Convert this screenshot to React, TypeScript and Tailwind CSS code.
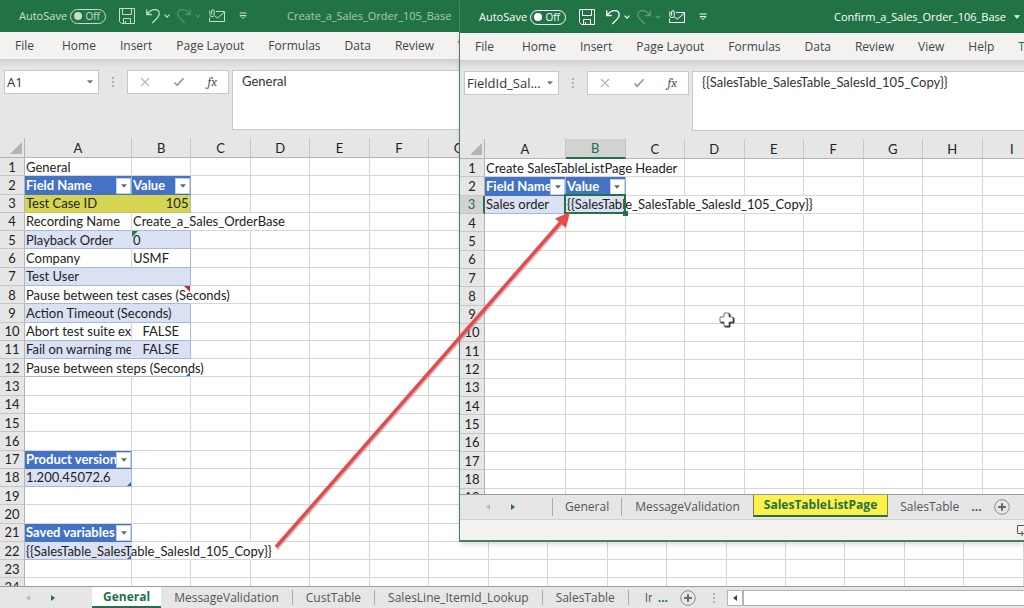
import React from 'react';
import clsx from 'clsx';

interface Cell {
  text?: string;
  className?: string;
  open?: boolean; // text runs on into the next cell, so there is no line on the right
  filter?: boolean;
  mark?: 'error' | 'comment' | 'end';
  selected?: boolean;
}

interface SheetData {
  columns: string[];
  rowCount: number;
  cells: Record<string, Cell>;
  active?: { column: string; row: number };
}

const HEAD = 'bg-[#4472c4] text-white font-bold overflow-hidden border-b-[#4472c4] border-r-[#8ea9db]';
const BAND = 'bg-[#d9e1f2] border-b-[#a3b9e0]';
const PLAIN = 'border-b-[#a3b9e0]';
const YELLOW = 'bg-[#d6d551] border-b-[#c3c56b]';
const EDGE = 'border-r-[#a3b9e0]';

const generalSheet: SheetData = {
  columns: 'ABCDEFGHIJKLMNOP'.split(''),
  rowCount: 24,
  cells: {
    A1: { text: 'General' },
    A2: { text: 'Field Name', className: HEAD, filter: true },
    B2: { text: 'Value', className: HEAD, filter: true },
    A3: { text: 'Test Case ID', className: YELLOW, open: true },
    B3: { text: '105', className: clsx(YELLOW, EDGE, 'text-right') },
    A4: { text: 'Recording Name', className: PLAIN },
    B4: { text: 'Create_a_Sales_OrderBase', className: PLAIN, open: true },
    C4: { open: true },
    A5: { text: 'Playback Order', className: BAND, open: true },
    B5: { text: '0', className: clsx(BAND, EDGE), mark: 'error' },
    A6: { text: 'Company', className: PLAIN },
    B6: { text: 'USMF', className: clsx(PLAIN, EDGE) },
    A7: { text: 'Test User', className: BAND, open: true },
    B7: { className: clsx(BAND, EDGE) },
    A8: { text: 'Pause between test cases (Seconds)', className: PLAIN, open: true },
    B8: { className: PLAIN, open: true, mark: 'comment' },
    A9: { text: 'Action Timeout (Seconds)', className: BAND, open: true },
    B9: { className: clsx(BAND, EDGE) },
    A10: { text: 'Abort test suite exe', className: clsx(PLAIN, 'overflow-hidden') },
    B10: { text: 'FALSE', className: clsx(PLAIN, EDGE, 'text-center') },
    A11: { text: 'Fail on warning me', className: clsx(BAND, 'overflow-hidden'), open: true },
    B11: { text: 'FALSE', className: clsx(BAND, EDGE, 'text-center') },
    A12: { text: 'Pause between steps (Seconds)', className: PLAIN, open: true },
    B12: { className: PLAIN, open: true, mark: 'end' },
    A17: { text: 'Product version', className: HEAD, filter: true },
    A18: { text: '1.200.45072.6', className: clsx(BAND, EDGE), mark: 'end' },
    A21: { text: 'Saved variables', className: HEAD, filter: true },
    A22: { text: '{{SalesTable_SalesTable_SalesId_105_Copy}}', className: BAND, open: true, mark: 'end' },
    B22: { open: true },
    C22: { open: true },
  },
};

const listPageSheet: SheetData = {
  columns: 'ABCDEFGHI'.split(''),
  rowCount: 19,
  active: { column: 'B', row: 3 },
  cells: {
    A1: { text: 'Create SalesTableListPage Header', open: true },
    B1: { open: true },
    A2: { text: 'Field Name', className: HEAD, filter: true },
    B2: { text: 'Value', className: HEAD, filter: true },
    A3: { text: 'Sales order', className: BAND },
    B3: { text: '{{SalesTable_SalesTable_SalesId_105_Copy}}', className: BAND, open: true, selected: true },
    C3: { open: true },
    D3: { open: true },
    E3: { open: true },
  },
};

const ribbonTabs = ['Home', 'Insert', 'Page Layout', 'Formulas', 'Data', 'Review', 'View', 'Help'];

const Chevron: React.FC<{ className?: string }> = ({ className }) => (
  <svg className={clsx('h-1 w-1.5 shrink-0', className)} viewBox="0 0 6 4" fill="none" stroke="currentColor" strokeWidth="1.2">
    <path d="M.6.7 3 3.1 5.4.7" />
  </svg>
);

const Caret: React.FC<{ className?: string }> = ({ className }) => (
  <svg className={clsx('h-1 w-1.5 shrink-0', className)} viewBox="0 0 6 4" fill="currentColor">
    <path d="M0 .2h6L3 3.8z" />
  </svg>
);

const TitleBar: React.FC<{ title: string; inactive?: boolean }> = ({ title, inactive }) => (
  <header className="flex h-8 shrink-0 items-center bg-[#217346] pl-[19px] pr-1 text-white">
    <div className={clsx('flex items-center', inactive && 'opacity-75')}>
      <span className="w-[51px] text-[11px] leading-4">AutoSave</span>
      <button
        role="switch"
        aria-checked="false"
        aria-label="AutoSave"
        className="flex h-[15px] w-9 items-center justify-between rounded-full border border-white pl-[3px] pr-[5px] text-[10px] leading-3"
      >
        <span className="h-2 w-2 shrink-0 rounded-full bg-white" />
        Off
      </button>
      <button aria-label="Save" className="ml-[13px]">
        <svg className="h-4 w-4" viewBox="0 0 16 16" fill="none" stroke="currentColor">
          <path d="M.5.5h15v15h-13l-2-2zM3.5.5v6h9v-6M4.5 15.500v-5h7v5M6.500 13v2.500" />
        </svg>
      </button>
      <button aria-label="Undo" className="ml-[11px] flex items-center gap-1">
        <svg className="h-4 w-[14px]" viewBox="0 0 14 16" fill="none" stroke="currentColor" strokeWidth="1.3">
          <path d="M.8 1.500v5h5M1 6.300C3.500 3 6 1.700 8.800 1.700c2.600 0 4.400 1.800 4.400 4.100 0 1.500-.6 2.600-1.700 3.800L6.300 15" />
        </svg>
        <Chevron />
      </button>
      <button aria-label="Redo" className="ml-[7px] flex items-center gap-1 opacity-30">
        <svg className="h-4 w-[14px]" viewBox="0 0 14 16" fill="none" stroke="currentColor" strokeWidth="1.3">
          <path d="M13.200 1.500v5h-5M13 6.300C10.500 3 8 1.700 5.200 1.700 2.600 1.700.8 3.500.8 5.800c0 1.500.6 2.600 1.700 3.800L7.700 15" />
        </svg>
        <Chevron />
      </button>
      <button aria-label="Email" className="ml-2">
        <svg className="h-4 w-4" viewBox="0 0 16 16" fill="none" stroke="currentColor">
          <path d="M7 3.500h8.500v10H.5V9.500M5.500 8l3 2 7-6" />
          <path d="M.8 2.500v4a2.200 2.200 0 0 0 4.400 0V3a1.300 1.300 0 0 0-2.600 0v3.500" />
        </svg>
      </button>
      <button aria-label="Customize Quick Access Toolbar" className="ml-[14px]">
        <svg className="h-2 w-2" viewBox="0 0 8 8" fill="none" stroke="currentColor">
          <path d="M.5 1h7M1 3.500h6L4 6.500z" />
        </svg>
      </button>
    </div>
    <div className={clsx('flex items-center text-[11px] leading-4', inactive ? 'ml-10 opacity-60' : 'ml-auto', 'gap-2')}>
      <span>{title}</span>
      <Caret />
    </div>
  </header>
);

const Ribbon: React.FC = () => (
  <nav className="flex h-7 shrink-0 items-center gap-6 overflow-hidden whitespace-nowrap border-b border-[#d0cecc] bg-[#f3f2f1] pl-[15px] text-xs leading-4 text-[#444]">
    <button className="mr-1">File</button>
    {ribbonTabs.map(tab => (
      <button key={tab}>{tab}</button>
    ))}
    <button className="text-[#217346]">Table Design</button>
  </nav>
);

const Dots: React.FC = () => (
  <span className="flex flex-col gap-0.5">
    <i className="h-0.5 w-0.5 bg-[#b0b0b0]" />
    <i className="h-0.5 w-0.5 bg-[#b0b0b0]" />
    <i className="h-0.5 w-0.5 bg-[#b0b0b0]" />
  </span>
);

const FormulaBar: React.FC<{ name: string; value: string }> = ({ name, value }) => (
  <div className="flex shrink-0 items-start bg-gradient-to-b from-[#d4d4d4] via-[#e6e6e6] via-10% to-[#e6e6e6] pb-2 pl-1 pt-2.5 text-[#333]">
    <div className="flex h-6 w-[95px] shrink-0 items-center border border-[#c8c8c8] bg-white pl-0.5 pr-[5px]">
      <input
        aria-label="Name box"
        defaultValue={name}
        className="w-0 flex-1 text-[13px] leading-4 outline-none"
      />
      <Caret className="text-[#777]" />
    </div>
    <div className="flex h-6 w-7 shrink-0 items-center justify-center">
      <Dots />
    </div>
    <div className="flex h-6 w-[102px] shrink-0 items-center justify-between border border-[#c8c8c8] bg-white pl-3 pr-[11px]">
      <button aria-label="Cancel">
        <svg className="h-2.5 w-2.5" viewBox="0 0 10 10" stroke="#b5b5b5" strokeWidth="1.2">
          <path d="m1 1 8 8M9 1 1 9" />
        </svg>
      </button>
      <button aria-label="Enter">
        <svg className="h-2.5 w-2.5" viewBox="0 0 10 10" fill="none" stroke="#999" strokeWidth="1.700">
          <path d="m.5 5.500 2.700 2.700 6.300-7" />
        </svg>
      </button>
      <button aria-label="Insert function" className="font-serif text-[13px] italic leading-4 text-[#555]">
        fx
      </button>
    </div>
    <textarea
      aria-label="Formula"
      defaultValue={value}
      className="ml-[3px] h-[60px] flex-1 resize-none border border-r-0 border-[#c8c8c8] bg-white px-[9px] py-0.5 font-[Lato,sans-serif] text-[13px] leading-4 outline-none"
    />
  </div>
);

const SheetCell: React.FC<{ cell?: Cell }> = ({ cell = {} }) => (
  <td
    className={clsx(
      'border-b border-r border-[#d6d6d6] py-0 pl-px pr-0.5',
      (cell.filter || cell.mark || cell.selected) && 'relative',
      cell.className,
      cell.open && 'border-r-transparent',
    )}
  >
    {cell.text}
    {cell.filter && (
      <button
        aria-label={`Filter ${cell.text}`}
        className="absolute bottom-0 right-0 flex h-4 w-[15px] items-center justify-center border border-[#c5d0e6] bg-white text-[#666]"
      >
        <Caret />
      </button>
    )}
    {cell.mark === 'error' && <i className="absolute left-0 top-0 border-r-[6px] border-t-[6px] border-r-transparent border-t-[#1e8040]" />}
    {cell.mark === 'comment' && <i className="absolute right-0 top-0 border-l-[6px] border-t-[6px] border-l-transparent border-t-[#d6202a]" />}
    {cell.mark === 'end' && <i className="absolute bottom-0 right-0 border-b-4 border-l-4 border-b-[#3a5fb0] border-l-transparent" />}
    {cell.selected && (
      <span className="absolute -bottom-px -left-0.5 -right-px -top-0.5 border-2 border-[#217346]">
        <i className="absolute -bottom-1 -right-1 h-[5px] w-[5px] bg-[#217346]" />
      </span>
    )}
  </td>
);

const Sheet: React.FC<{ sheet: SheetData; className: string; firstColumn: string }> = ({ sheet, className, firstColumn }) => (
  <div className="min-h-0 flex-1 overflow-hidden bg-white">
    <table
      className={clsx(
        'table-fixed border-separate border-spacing-0 whitespace-nowrap font-[Lato,sans-serif] text-[13px] leading-4 text-[#222]',
        className,
      )}
    >
      <colgroup>
        <col className="w-[25px]" />
        <col className={firstColumn} />
      </colgroup>
      <thead>
        <tr className="h-5">
          <th className="border-b border-r border-[#b4b4b4] bg-[#e6e6e6] p-0" aria-label="Select all">
            <svg className="ml-auto mr-0.5 h-3 w-3" viewBox="0 0 12 12" fill="#b4b4b4">
              <path d="M12 0v12H0z" />
            </svg>
          </th>
          {sheet.columns.map(column => (
            <th
              key={column}
              className={clsx(
                'border-r p-0 font-normal',
                column === sheet.active?.column
                  ? 'border-b-2 border-b-[#217346] border-r-[#c0c0c0] bg-[#d2d2d2] text-[#217346]'
                  : 'border-b border-b-[#b4b4b4] border-r-[#c6c6c6] bg-[#e6e6e6]',
              )}
            >
              {column}
            </th>
          ))}
        </tr>
      </thead>
      <tbody>
        {Array.from({ length: sheet.rowCount }, (_, i) => i + 1).map(row => (
          <tr key={row}>
            <th
              className={clsx(
                'border-b border-b-[#c6c6c6] p-0 font-normal',
                row === sheet.active?.row
                  ? 'border-r-2 border-r-[#217346] bg-[#d2d2d2] text-[#217346]'
                  : 'border-r border-r-[#b4b4b4] bg-[#e6e6e6]',
              )}
            >
              {row}
            </th>
            {sheet.columns.map(column => (
              <SheetCell key={column} cell={sheet.cells[`${column}${row}`]} />
            ))}
          </tr>
        ))}
      </tbody>
    </table>
  </div>
);

const SheetNav: React.FC = () => (
  <div className="flex w-[92px] shrink-0 items-center gap-[21px] pl-[26px]">
    <button aria-label="Previous sheet">
      <svg className="h-1.5 w-1" viewBox="0 0 4 6" fill="#bbb">
        <path d="M4 0v6L0 3z" />
      </svg>
    </button>
    <button aria-label="Next sheet">
      <svg className="h-1.5 w-1" viewBox="0 0 4 6" fill="#217346">
        <path d="M0 0v6l4-3z" />
      </svg>
    </button>
  </div>
);

const AddSheet: React.FC = () => (
  <button aria-label="New sheet" className="shrink-0">
    <svg className="h-4 w-4" viewBox="0 0 16 16" fill="none" stroke="#8a8a8a">
      <circle cx="8" cy="8" r="7.300" />
      <path d="M8 4.200v7.600M4.200 8h7.600" stroke="#666" strokeWidth="2" />
    </svg>
  </button>
);

const SheetTab: React.FC<{ label: string; className?: string }> = ({ label, className }) => (
  <button className={clsx('my-[3px] shrink-0 border-[#ababab]', className)}>{label}</button>
);

const CreateOrderWindow: React.FC = () => (
  <section className="flex h-full flex-col">
    <TitleBar title="Create_a_Sales_Order_105_Base" inactive />
    <Ribbon />
    <FormulaBar name="A1" value="General" />
    <Sheet sheet={generalSheet} className="h-[459px] w-full" firstColumn="w-[107px]" />
    <footer className="flex h-[22px] shrink-0 items-stretch whitespace-nowrap border-t border-[#9c9c9c] bg-[#e6e6e6] text-xs leading-4 text-[#555]">
      <SheetNav />
      <button className="shrink-0 border-b-2 border-[#217346] bg-white px-[11px] font-bold text-[#217346]">General</button>
      <SheetTab label="MessageValidation" className="border-r px-[13px]" />
      <SheetTab label="CustTable" className="border-r px-[13px]" />
      <SheetTab label="SalesLine_ItemId_Lookup" className="border-r px-[13px]" />
      <SheetTab label="SalesTable" className="border-r px-[13px]" />
      <button className="ml-4 w-[7px] shrink-0 overflow-hidden text-left">In</button>
      <div className="flex flex-1 items-center">
        <button aria-label="More sheets" className="ml-1.5 mr-3 font-bold text-[#217346]">...</button>
        <AddSheet />
        <span className="ml-[17px] mr-3">
          <Dots />
        </span>
        <div className="flex h-4 flex-1">
          <button aria-label="Scroll left" className="flex w-4 items-center justify-center border border-[#b4b4b4] bg-white">
            <svg className="h-1.5 w-1" viewBox="0 0 4 6" fill="#444">
              <path d="M4 0v6L0 3z" />
            </svg>
          </button>
          <div className="flex-1 border-y border-l border-[#b4b4b4] bg-white" />
        </div>
      </div>
    </footer>
  </section>
);

const ConfirmOrderWindow: React.FC = () => (
  <section className="absolute left-[459px] right-0 top-0 flex h-[542px] flex-col overflow-hidden border-b-2 border-l border-t border-[#4b7f63] border-t-[#217346] shadow-md">
    <TitleBar title="Confirm_a_Sales_Order_106_Base" />
    <Ribbon />
    <FormulaBar name="FieldId_Sal..." value="{{SalesTable_SalesTable_SalesId_105_Copy}}" />
    <Sheet sheet={listPageSheet} className="h-[368px] w-[582px]" firstColumn="w-[81px]" />
    <footer className="shrink-0">
      <div className="flex h-[26px] items-stretch whitespace-nowrap border-b border-t border-[#cfcfcf] border-t-[#9c9c9c] bg-[#e6e6e6] text-xs leading-4 text-[#555]">
        <SheetNav />
        <SheetTab label="General" className="border-x px-3" />
        <SheetTab label="MessageValidation" className="px-[13px]" />
        <button className="mb-0.5 shrink-0 border-x border-b-2 border-[#7a8a2a] border-b-[#217346] bg-[#fff04c] px-2.5 font-bold text-[#217346]">
          SalesTableListPage
        </button>
        <SheetTab label="SalesTable" className="px-3" />
        <button aria-label="More sheets" className="mr-3 font-bold text-[#217346]">...</button>
        <AddSheet />
      </div>
      <div className="flex h-5 items-center justify-end bg-[#f3f2f1]">
        <svg className="h-3 w-2.5" viewBox="0 0 10 12" fill="none" stroke="#555">
          <path d="M10 1.500H3.500v8H7M8 7v5M5.500 9.500H10" />
        </svg>
      </div>
    </footer>
  </section>
);

const App: React.FC = () => {
  return (
    <div className="relative h-screen overflow-hidden bg-white font-['Open_Sans',sans-serif]">
      <CreateOrderWindow />
      <ConfirmOrderWindow />

      {/* Arrow from the saved variable to the cell that uses it */}
      <svg className="pointer-events-none absolute left-0 top-0 h-[608px] w-[1024px]" viewBox="0 0 1024 608">
        <path d="M277 549 562 224" stroke="#777" strokeOpacity=".4" strokeWidth="3" />
        <path d="M276 547 561 222" stroke="#e8494b" strokeWidth="3.500" />
        <path d="M570 212 566 228 555 218.500z" fill="#e8494b" />
        {/* Cell cursor */}
        <path d="M725 314h5v4h4v5h-4v4h-5v-4h-4v-5h4z" fill="#333" stroke="#333" />
        <path d="M724 313h5v4h4v5h-4v4h-5v-4h-4v-5h4z" fill="#fff" stroke="#555" strokeWidth=".8" />
      </svg>
    </div>
  );
};

export default App;
